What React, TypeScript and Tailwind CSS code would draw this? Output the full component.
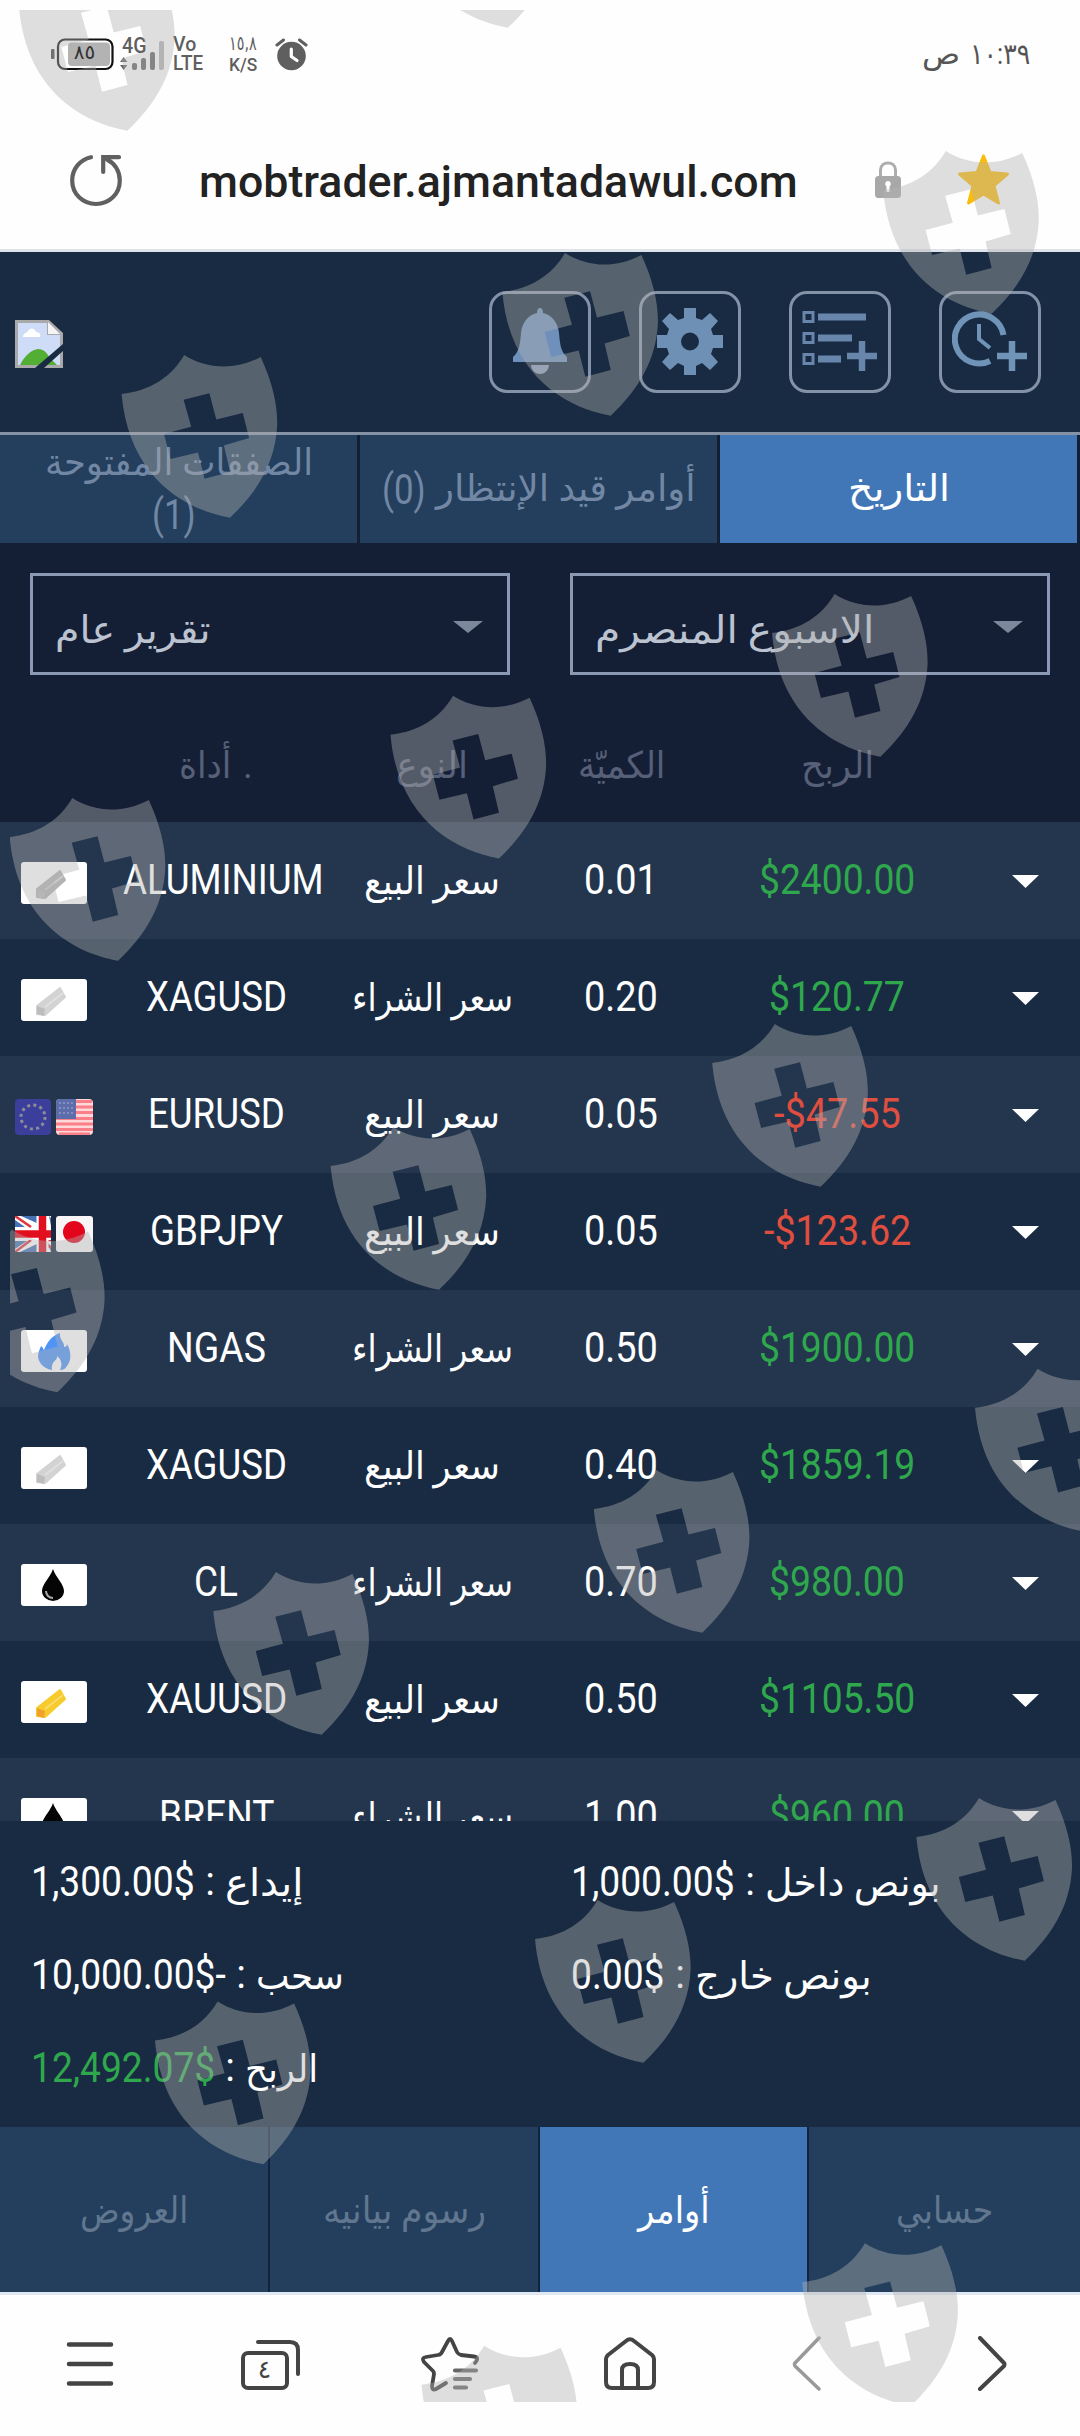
import { useLayoutEffect, useRef, useState } from "react";
import type { ReactNode } from "react";
import clsx from "clsx";

interface FitProps {
  w: number;
  className?: string;
  children: ReactNode;
}

// Condenses a single line of text to the given width
function Fit({ w, className, children }: FitProps) {
  const ref = useRef<HTMLSpanElement>(null);
  const [scale, setScale] = useState(1);

  useLayoutEffect(() => {
    if (ref.current) setScale(w / ref.current.offsetWidth);
  }, [w, children]);

  return (
    <span dir="ltr" className={clsx("block shrink-0 text-left whitespace-nowrap", className)} style={{ width: w }}>
      <span ref={ref} className="inline-block origin-left" style={{ transform: `scaleX(${scale})` }}>
        {children}
      </span>
    </span>
  );
}

type Thumb = "aluminium" | "silver" | "gold" | "gas" | "oil" | "eurusd" | "gbpjpy";

interface Order {
  thumb: Thumb;
  symbol: string;
  symbolW: number;
  side: "sell" | "buy";
  qty: string;
  profit: string;
  profitW: number;
}

const ORDERS: Order[] = [
  { thumb: "aluminium", symbol: "ALUMINIUM", symbolW: 201, side: "sell", qty: "0.01", profit: "$2400.00", profitW: 156 },
  { thumb: "silver", symbol: "XAGUSD", symbolW: 141, side: "buy", qty: "0.20", profit: "$120.77", profitW: 136 },
  { thumb: "eurusd", symbol: "EURUSD", symbolW: 137, side: "sell", qty: "0.05", profit: "-$47.55", profitW: 127 },
  { thumb: "gbpjpy", symbol: "GBPJPY", symbolW: 133, side: "sell", qty: "0.05", profit: "-$123.62", profitW: 147 },
  { thumb: "gas", symbol: "NGAS", symbolW: 99, side: "buy", qty: "0.50", profit: "$1900.00", profitW: 156 },
  { thumb: "silver", symbol: "XAGUSD", symbolW: 141, side: "sell", qty: "0.40", profit: "$1859.19", profitW: 156 },
  { thumb: "oil", symbol: "CL", symbolW: 44, side: "buy", qty: "0.70", profit: "$980.00", profitW: 136 },
  { thumb: "gold", symbol: "XAUUSD", symbolW: 141, side: "sell", qty: "0.50", profit: "$1105.50", profitW: 156 },
  { thumb: "oil", symbol: "BRENT", symbolW: 115, side: "buy", qty: "1.00", profit: "$960.00", profitW: 136 },
];

const SIDES = {
  sell: { label: "سعر البيع", w: 136 },
  buy: { label: "سعر الشراء", w: 161 },
};

const SHIELDS = [
  [19, -32], [399.5, -135], [883.2, 151], [502.3, 253], [121.6, 355], [772, 594], [390.5, 695.7], [9.7, 798],
  [712.2, 1024], [330.6, 1127], [-51, 1229.6], [975, 1368.7], [593.8, 1470], [213.3, 1572], [916.4, 1798],
  [535, 1900], [155, 2001.5], [802.3, 2243.3], [421.5, 2345.7],
];

function Watermark() {
  return (
    <svg className="pointer-events-none absolute inset-0" width="1080" height="2436" viewBox="0 0 1080 2436">
      <clipPath id="frame">
        <rect x="10" y="10" width="1070" height="2392" />
      </clipPath>
      <g clipPath="url(#frame)" fill="#b1b1b1" fillOpacity="0.41" fillRule="evenodd">
        {SHIELDS.map(([x, y]) => (
          <path
            key={`${x}-${y}`}
            transform={`translate(${x} ${y})`}
            d="M0 39C28 36 50 22 62.6 0C85 14 112 16 139.1 2C151 28 156 50 155.6 70C154 105 138 135 108.4 162.7C60 154 7 120 0 39ZM62 44.7L87.8 38.3L94.7 64.5L121.2 58L127.5 83L102.3 90.5L108.5 117L83 123.7L76.4 97.5L48.9 104L42.4 79L69.6 71.7Z"
          />
        ))}
      </g>
    </svg>
  );
}

function StatusBar() {
  return (
    <div className="flex h-[108px] items-start pt-9 pl-[51px] pr-[50px] text-[#5f5f5f]">
      <svg width="63" height="34" viewBox="0 0 63 34" className="mt-0.5 shrink-0">
        <rect x="0" y="11" width="3.5" height="10" rx="1" fill="#444" />
        <rect x="7" y="1.5" width="54.5" height="29.5" rx="7" fill="none" stroke="#111" strokeWidth="2.2" />
        <rect x="17" y="4.5" width="42" height="23.5" rx="4" fill="#b3b3b3" />
        <text x="33.5" y="20.5" fontSize="20" textAnchor="middle" fill="#333" className="font-['DejaVu_Sans',sans-serif]">٨٥</text>
      </svg>
      <div className="relative ml-1.5 h-9 w-[46px] shrink-0">
        <span className="absolute top-0 left-0.5 text-[22px] leading-5 font-medium">
          <Fit w={25}>4G</Fit>
        </span>
        <svg width="46" height="36" viewBox="0 0 46 36" className="absolute inset-0" fill="#666">
          <path d="M0 26L3.7 21L7.4 26ZM0 29L3.7 34L7.4 29Z" />
          <rect x="12" y="27" width="5" height="7" rx="2" />
          <rect x="21" y="22" width="5" height="12" rx="2" />
          <rect x="30" y="16" width="5" height="18" rx="2" />
          <rect x="39" y="5" width="5" height="29" rx="2" fill="#b5b5b5" />
        </svg>
      </div>
      <div className="ml-[7px] text-[19.5px] leading-[18.5px] font-medium">
        <Fit w={23}>Vo</Fit>
        <Fit w={30}>LTE</Fit>
      </div>
      <div className="ml-[26px] text-[18px] leading-[19px]">
        <Fit w={28} className="-mt-0.5 text-[20px] font-['DejaVu_Sans',sans-serif]">١٥,٨</Fit>
        <Fit w={28} className="mt-0.5 font-medium">K/S</Fit>
      </div>
      <svg width="33" height="33" viewBox="0 0 33 33" className="mt-0.5 ml-[18px]">
        <path d="M2 7L8.5 2M24.5 2L31 7" stroke="#5f5f5f" strokeWidth="3" strokeLinecap="round" />
        <circle cx="16.5" cy="18" r="14.3" fill="#5f5f5f" />
        <path d="M16.3 11V18.5L22 22.5" fill="none" stroke="#fff" strokeWidth="3.2" strokeLinecap="round" strokeLinejoin="round" />
      </svg>
      <div className="ml-auto flex text-[29px] leading-[50px] text-[#555]">
        <Fit w={38} className="-mt-[7px]">ص</Fit>
        <Fit w={60} className="ml-2.5 -mt-[7px]">١٠:٣٩</Fit>
      </div>
    </div>
  );
}

function AddressBar() {
  return (
    <div className="flex h-[141px] items-start pt-11 pl-[70px]">
      <svg width="52" height="54" viewBox="0 0 52 54" fill="none" stroke="#606060" strokeWidth="4.2" className="mt-0.5 shrink-0" strokeLinecap="round">
        <path d="M21 3.2C10 5.5 2.2 15 2.2 26.5C2.2 40 12.8 50 26 50S49.8 40 49.8 26.5C49.8 17.5 45 9.5 37 5.5" />
        <path d="M49 3.2H33.2V18" />
      </svg>
      <Fit w={599} className="ml-[77px] text-[45px] leading-[60px] font-medium text-[#222]">mobtrader.ajmantadawul.com</Fit>
      <svg width="28" height="39" viewBox="0 0 28 39" className="mt-[9px] ml-[76px] shrink-0">
        <path d="M6.5 17V9C6.5-.5 21.500-.5 21.500 9V17" fill="none" stroke="#adadad" strokeWidth="3" />
        <rect x="1" y="15" width="26" height="22" rx="3.500" fill="#a8a8a8" />
        <path d="M14 20a3 3 0 0 1 1.500 5.500V31h-3v-5.500A3 3 0 0 1 14 20Z" fill="#fff" />
      </svg>
      <svg width="53" height="53" viewBox="0 0 53 53" className="mt-px ml-[55px] shrink-0">
        <path d="M26.500 3L33 19.500L50.500 21L37 32.500L41.500 50L26.500 41L11.500 50L16 32.500L2.500 21L20 19.500Z" fill="#fcbc0b" stroke="#fcbc0b" strokeWidth="3" strokeLinejoin="round" />
      </svg>
    </div>
  );
}

function BrokenImage() {
  return (
    <svg width="48" height="48" viewBox="0 0 48 48" className="mt-[3px]">
      <path d="M0 0H34L48 13V48H0Z" fill="#a9a9a9" />
      <path d="M3 3H32V15H45V45H3Z" fill="#cfdcf8" />
      <path d="M8 17C8 13 12 13 13 11C15 7 20 8 21 12C25 12 26 15 25 17Z" fill="#fff" />
      <path d="M5 45C9 37 15 30 23 29C29 29 32 33 34 37L42 45Z" fill="#53ae34" />
      <path d="M33 2L45 14H33Z" fill="#f5f5f5" />
      <path d="M48 24L20 48H29L48 31Z" fill="#192b42" />
    </svg>
  );
}

const TOOL_ICONS: { name: string; icon: ReactNode }[] = [
  {
    name: "alerts",
    icon: (
      <svg width="76" height="70" viewBox="0 0 76 70" fill="#6e90bb">
        <path d="M38 1C40 1 41 3 41 6C50 8 56 16 57 26C58 38 59 45 65 50V55H11V50C17 45 18 38 19 26C20 16 26 8 35 6C35 3 36 1 38 1Z" />
        <path d="M29 58H47C46 70 30 70 29 58Z" fill="#8799b8" />
      </svg>
    ),
  },
  {
    name: "settings",
    icon: (
      <svg width="76" height="70" viewBox="0 0 76 70" fill="#6e90b5">
        <path
          fillRule="evenodd"
          d="M32 1H44V11L50 13L58 6L66 14L59 22L61 28H71V41H61L59 47L66 55L58 63L50 56L44 59V68H32V59L26 56L18 63L10 55L17 47L15 41H5V28H15L17 22L10 14L18 6L26 13L32 11ZM38 25.500A9 9 0 1 0 38 43.500A9 9 0 1 0 38 25.500Z"
        />
      </svg>
    ),
  },
  {
    name: "watchlist",
    icon: (
      <svg width="76" height="70" viewBox="0 0 76 70" fill="none" stroke="#6886ab" strokeWidth="3">
        <path d="M2 5.500h9v9h-9zM2 26.500h9v9h-9zM2 47.500h9v9h-9z" />
        <path d="M16 10H64M16 31H50M16 52H39" strokeWidth="7" />
        <path d="M45 49H75M60 34V64" strokeWidth="6.500" />
      </svg>
    ),
  },
  {
    name: "pending",
    icon: (
      <svg width="76" height="70" viewBox="0 0 76 70" fill="none" stroke="#7093b8" strokeWidth="6">
        <path d="M38 54A24.500 24.500 0 1 1 51.500 28" />
        <path d="M27 17V32L38 41" strokeWidth="4" />
        <path d="M45 49H75M60 34V64" strokeWidth="6.500" />
      </svg>
    ),
  },
];

function AppHeader() {
  return (
    <header className="flex h-[186px] items-center border-t-[3px] border-b-[3px] border-t-[#dfe3ea] border-b-[#8592a6] bg-[#192b42] pr-[39px] pl-[15px]">
      <BrokenImage />
      <div className="ml-auto flex gap-12">
        {TOOL_ICONS.map((tool) => (
          <button key={tool.name} className="flex size-[102px] items-center justify-center rounded-[18px] border-[3px] border-[#8492a7]">
            {tool.icon}
          </button>
        ))}
      </div>
    </header>
  );
}

function OrderTabs() {
  return (
    <div className="flex h-[108px] bg-[#141f36] text-[37px] text-[#7287a4]">
      <button className="mr-[3px] flex w-[357px] flex-col items-center bg-[#233f5d]">
        <Fit w={268} className="leading-[56px]">الصفقات المفتوحة</Fit>
        <Fit w={44} className="-ml-2.5 text-[42px] leading-[48px]">(1)</Fit>
      </button>
      <button className="mr-[3px] flex w-[357px] items-center justify-center gap-2.5 bg-[#233f5d] leading-[109px]">
        <Fit w={44} className="text-[42px]">(0)</Fit>
        <Fit w={260} className="leading-[112px]">أوامر قيد الإنتظار</Fit>
      </button>
      <button className="flex w-[357px] items-center justify-center bg-[#4277b7] leading-[112px] text-white">
        <Fit w={102}>التاريخ</Fit>
      </button>
    </div>
  );
}

function Select({ label, w }: { label: string; w: number }) {
  return (
    <div className="flex h-[102px] w-[480px] items-center justify-between border-[3px] border-[#8b99b5] pr-6 pl-[22px] text-[#bcc3d0]">
      <Fit w={w} className="pt-3 text-[38px] leading-[114px]">{label}</Fit>
      <svg width="30" height="12" viewBox="0 0 30 12" className="mt-1.5">
        <path d="M0 0H30L15 12Z" fill="#7b879b" />
      </svg>
    </div>
  );
}

function Bar({ from, to }: { from: string; to: string }) {
  return (
    <g>
      <path d="M16 27L39 9L44 18L24 36L16 35Z" fill={to} stroke={to} strokeWidth="2" strokeLinejoin="round" />
      <path d="M16 27L24 30L23 37L16 35Z" fill={from} />
      <path d="M24 28L42 14" stroke="#fff" strokeOpacity="0.3" strokeWidth="2" />
    </g>
  );
}

function Thumbnail({ kind }: { kind: Thumb }) {
  if (kind === "eurusd") {
    return (
      <div className="flex gap-[5px]">
        <svg width="36" height="36" viewBox="0 0 36 36">
          <rect width="36" height="36" rx="4" fill="#3b3f9b" />
          <circle cx="18" cy="18" r="12" fill="none" stroke="#8d8d94" strokeWidth="3" strokeDasharray="3 3.280" />
        </svg>
        <svg width="37" height="36" viewBox="0 0 37 36">
          <rect width="37" height="36" rx="4" fill="#ffd9da" />
          <path d="M20 2.500H36M20 8H37M20 13.500H37M0 19.500H37M0 25H37M0 30.500H37M3 35H34" stroke="#fb7f88" strokeWidth="3" />
          <path d="M4 0H20V20H0V4Q0 0 4 0Z" fill="#5d6cab" />
          <path d="M3 4H19M3 9H19M3 14H19" stroke="#8f9bc6" strokeWidth="1.500" strokeDasharray="2 2" />
        </svg>
      </div>
    );
  }
  if (kind === "gbpjpy") {
    return (
      <div className="flex gap-[5px]">
        <svg width="36" height="36" viewBox="0 0 36 36">
          <rect width="36" height="36" fill="#fff" />
          <path d="M6 0H24V8ZM0 4V11H10ZM34 0L36 2V10ZM0 25V33L12 25ZM5 36H24V27ZM33 27L36 30V36Z" fill="#4570b5" />
          <path d="M0 0L16 11M36 24L27 24L36 32M0 36L16 24" stroke="#e0343f" strokeWidth="2.500" fill="none" />
          <path d="M0 18H36M27.500 0V36" stroke="#fff" strokeWidth="12" />
          <path d="M0 18H36M27.500 0V36" stroke="#e2101f" strokeWidth="7.500" />
        </svg>
        <svg width="37" height="36" viewBox="0 0 37 36">
          <rect width="37" height="36" rx="3" fill="#f7f5f6" />
          <circle cx="18" cy="16" r="11" fill="#e2051c" />
        </svg>
      </div>
    );
  }
  return (
    <svg width="66" height="42" viewBox="0 0 66 42">
      <rect width="66" height="42" rx="3" fill="#fff" />
      {kind === "aluminium" && <Bar from="#b9b9b9" to="#b3b3b3" />}
      {kind === "silver" && <Bar from="#bdbdbd" to="#d3d3d3" />}
      {kind === "gold" && <Bar from="#f1a02c" to="#f7cb2c" />}
      {kind === "gas" && (
        <path d="M39 3C38 10 44 12 43 17C45 17 46 16 46 14C50 21 51 30 46 36C44 39 42 40 39 40C42 34 40 29 36 26C37 31 30 30 31 40C24 39 18 34 17 27C17 22 19 19 20 16C22 17 22 19 23 20C26 13 30 6 39 3Z" fill="#4f93f5" />
      )}
      {kind === "oil" && (
        <>
          <path d="M32 5C35 14 43 20 43 27A11 10 0 0 1 21 27C21 20 29 14 32 5Z" fill="#050505" />
          <path d="M25 27C25 31 28 34 32 34" fill="none" stroke="#aaa" strokeWidth="2" />
        </>
      )}
    </svg>
  );
}

function OrderRow({ order, striped }: { order: Order; striped: boolean }) {
  const side = SIDES[order.side];
  const loss = order.profit.startsWith("-");

  return (
    <div className={clsx("grid h-[117px] shrink-0 grid-cols-[108px_216px_216px_162px_270px_108px] items-start justify-items-center text-[42px] leading-[115px] text-white", striped ? "bg-[#24364d]" : "bg-[#192b42]")}>
      <div className="flex h-[121px] items-center">
        <Thumbnail kind={order.thumb} />
      </div>
      <Fit w={order.symbolW} className={order.symbol === "ALUMINIUM" ? "ml-3.5" : undefined}>{order.symbol}</Fit>
      <Fit w={side.w} className="text-[38px] leading-[119px]">{side.label}</Fit>
      <Fit w={74}>{order.qty}</Fit>
      <Fit w={order.profitW} className={loss ? "text-[#e04e40]" : "text-[#2fa84d]"}>{order.profit}</Fit>
      <svg width="27" height="13" viewBox="0 0 27 13" className="mt-[53px] -ml-px">
        <path d="M0 0H27L13.500 13Z" fill="#fff" />
      </svg>
    </div>
  );
}

interface TotalProps {
  value: string;
  valueW: number;
  label: string;
  labelW: number;
  green?: boolean;
}

function Total({ value, valueW, label, labelW, green }: TotalProps) {
  return (
    <div className="flex h-[93px] w-[540px] pl-[31px] text-[42px] leading-[93px] text-white">
      <Fit w={valueW} className={green ? "text-[#2fa84d]" : undefined}>{value}</Fit>
      <span className="w-[30px] text-center text-[40px]">:</span>
      <Fit w={labelW} className="text-[38px] leading-[96px]">{label}</Fit>
    </div>
  );
}

const NAV = [
  { label: "العروض", w: 108 },
  { label: "رسوم بيانيه", w: 163 },
  { label: "أوامر", w: 72, active: true },
  { label: "حسابي", w: 97 },
];

function BrowserBar() {
  return (
    <div className="flex h-36 items-start border-t-[3px] border-[#dfe8f3] bg-[#fefefe] pt-[41px] pl-[66px] text-[#444]">
      <svg width="48" height="58" viewBox="0 0 48 58" stroke="currentColor" strokeWidth="4.500" strokeLinecap="round">
        <path d="M3 8.500H45M3 28H45M3 47.500H45" />
      </svg>
      <svg width="60" height="58" viewBox="0 0 60 58" fill="none" stroke="currentColor" strokeWidth="4" className="ml-[126px]" strokeLinecap="round">
        <rect x="3" y="17" width="44" height="35" rx="5" />
        <path d="M18 6H50Q58 6 58 14V38" />
        <text x="24.500" y="42" fontSize="25" textAnchor="middle" fill="currentColor" stroke="none" className="font-['DejaVu_Sans',sans-serif]">٤</text>
      </svg>
      <svg width="60" height="58" viewBox="0 0 60 58" fill="none" stroke="currentColor" strokeWidth="3.800" className="ml-[120px]" strokeLinecap="round" strokeLinejoin="round">
        <path d="M55 27C58 24 58 21 54 20.500L41 19Q38 18 37 16L32 5Q30 1 28 5L22 16Q21 18.500 18 19L6 21Q1 22 4 26L13 35Q14 36 14 38L12 50Q12 55 16 53L26 47" />
        <path d="M35 34.500H56M35 43H50M35 51.500H46" stroke="#666" strokeWidth="4.200" />
      </svg>
      <svg width="54" height="58" viewBox="0 0 54 58" fill="none" stroke="currentColor" strokeWidth="4" className="ml-[123px]" strokeLinejoin="round">
        <path d="M3 23Q3 21 5 19L23 5Q27 1.500 31 5L49 19Q51 21 51 23V46Q51 52 45 52H9Q3 52 3 46Z" />
        <path d="M19 52V34Q19 28 27 28T35 34V52" />
      </svg>
      <svg width="32" height="58" viewBox="0 0 32 58" fill="none" stroke="#999" strokeWidth="3.500" className="ml-[134px]" strokeLinecap="round" strokeLinejoin="round">
        <path d="M28 2L4 27Q3 28 4 30L28 53" />
      </svg>
      <svg width="32" height="58" viewBox="0 0 32 58" fill="none" stroke="currentColor" strokeWidth="4" className="ml-[154px]" strokeLinecap="round" strokeLinejoin="round">
        <path d="M3 2L27 27Q28 28 27 30L3 53" />
      </svg>
    </div>
  );
}

export default function App() {
  return (
    <div dir="ltr" className="relative flex h-[2436px] w-[1080px] flex-col overflow-hidden bg-[#fefefe] font-['Roboto','DejaVu_Sans',sans-serif]">
      <StatusBar />
      <AddressBar />
      <AppHeader />
      <OrderTabs />

      {/* Filters */}
      <div className="flex h-[147px] gap-[60px] bg-[#141f36] px-[30px] pt-[30px]">
        <Select label="تقرير عام" w={156} />
        <Select label="الاسبوع المنصرم" w={279} />
      </div>

      {/* Column titles */}
      <div className="grid h-[132px] grid-cols-[108px_216px_216px_162px_270px_108px] justify-items-center bg-[#141f36] text-[37px] leading-[151px] text-[#576078]">
        <span />
        <div className="flex gap-3">
          <Fit w={52}>أداة</Fit>
          <span>.</span>
        </div>
        <Fit w={72}>النوع</Fit>
        <Fit w={87}>الكميّة</Fit>
        <Fit w={73}>الربح</Fit>
      </div>

      {/* Closed orders */}
      <div className="flex h-[999px] flex-col overflow-hidden">
        {ORDERS.map((order, i) => (
          <OrderRow key={i} order={order} striped={i % 2 === 0} />
        ))}
      </div>

      {/* Totals */}
      <div className="flex h-[306px] flex-wrap content-start bg-[#192b42] pt-3.5">
        <Total value="1,300.00$" valueW={164} label="إيداع" labelW={78} />
        <Total value="1,000.00$" valueW={164} label="بونص داخل" labelW={176} />
        <Total value="10,000.00$-" valueW={195} label="سحب" labelW={88} />
        <Total value="0.00$" valueW={94} label="بونص خارج" labelW={177} />
        <Total value="12,492.07$" valueW={184} label="الربح" labelW={73} green />
      </div>

      {/* App navigation */}
      <nav className="grid h-[165px] grid-cols-[268px_268px_267px_271px] gap-0.5 bg-[#14233d]">
        {NAV.map((item) => (
          <button key={item.label} className={clsx("flex items-center justify-center text-[37px] leading-[168px]", item.active ? "bg-[#4277b7] text-white" : "bg-[#233f5d] text-[#61768f]")}>
            <Fit w={item.w}>{item.label}</Fit>
          </button>
        ))}
      </nav>

      <BrowserBar />
      <Watermark />
    </div>
  );
}
